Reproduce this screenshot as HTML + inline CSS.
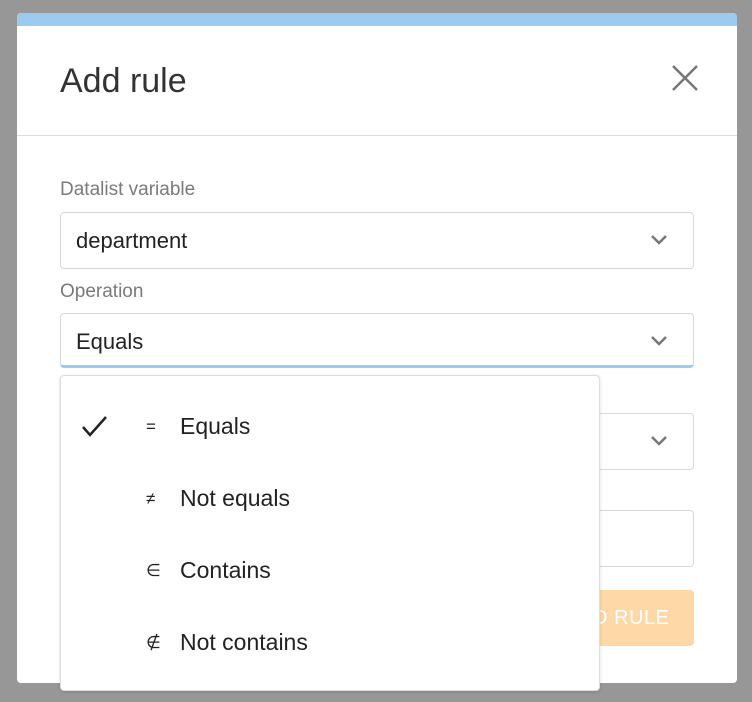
<!DOCTYPE html>
<html><head><style>
*{box-sizing:border-box;margin:0;padding:0}
body{width:752px;height:702px;background:#979797;font-family:"Liberation Sans",sans-serif;position:relative;overflow:hidden}
.modal{position:absolute;left:17px;top:13px;width:720px;height:670px;background:#fff;border-radius:4px;overflow:hidden}
.bar{height:13px;background:#9bccf0}
.title{position:absolute;left:43px;top:49px;font-size:34px;color:#333}
.close{position:absolute;left:655px;top:52px}
.hr{position:absolute;left:0;right:0;top:122px;border-top:1px solid #ddd}
.lbl{position:absolute;left:43px;font-size:19px;color:#7a7a7a}
.sel{position:absolute;left:43px;width:634px;height:57px;border:1px solid #d8d8d8;border-radius:4px;font-size:22px;color:#222;padding:15px 0 0 15px}
.chev{position:absolute;right:26px;top:22px}
.dd{position:absolute;left:60px;top:375px;width:540px;height:316px;background:#fff;border:1px solid #ddd;border-radius:4px;box-shadow:0 1px 3px rgba(0,0,0,.15)}
.it{position:absolute;left:0;font-size:23px;color:#222}
.it .s{position:absolute;left:85px;font-size:17px;top:4px}
.it .t{position:absolute;left:119px;white-space:nowrap}
.btn{position:absolute;left:520px;top:577px;width:157px;height:56px;background:#ffd8a8;border-radius:4px;color:#fff;font-size:20px;padding:17px 0 0 56px;letter-spacing:0.5px}
</style></head><body>
<div class="modal">
<div class="bar"></div>
<div class="title">Add rule</div>
<svg class="close" width="26" height="26" viewBox="0 0 26 26"><path d="M1 1L25 25M25 1L1 25" stroke="#777" stroke-width="2.5"/></svg>
<div class="hr"></div>
<div class="lbl" style="top:166px">Datalist variable</div>
<div class="sel" style="top:199px">department<svg class="chev" width="16" height="10" viewBox="0 0 16 10"><path d="M1 1L8 8L15 1" stroke="#777" stroke-width="2.5" fill="none"/></svg></div>
<div class="lbl" style="top:268px">Operation</div>
<div class="sel" style="top:300px;height:55px;border-bottom:3px solid #9bccf0">Equals<svg class="chev" width="16" height="10" viewBox="0 0 16 10"><path d="M1 1L8 8L15 1" stroke="#777" stroke-width="2.5" fill="none"/></svg></div>
<div class="sel" style="top:400px">&nbsp;<svg class="chev" width="16" height="10" viewBox="0 0 16 10"><path d="M1 1L8 8L15 1" stroke="#777" stroke-width="2.5" fill="none"/></svg></div>
<div class="sel" style="top:497px">&nbsp;</div>
<div class="btn">D RULE</div>
</div>
<div class="dd">
<svg style="position:absolute;left:20px;top:39px" width="28" height="24" viewBox="0 0 28 24"><path d="M2 12L9 20L25 2" stroke="#222" stroke-width="2.5" fill="none"/></svg>
<div class="it" style="top:37px"><span class="s">=</span><span class="t">Equals</span></div>
<div class="it" style="top:109px"><span class="s">≠</span><span class="t">Not equals</span></div>
<div class="it" style="top:181px"><span class="s">∈</span><span class="t">Contains</span></div>
<div class="it" style="top:253px"><span class="s">∉</span><span class="t">Not contains</span></div>
</div>
</body></html>
